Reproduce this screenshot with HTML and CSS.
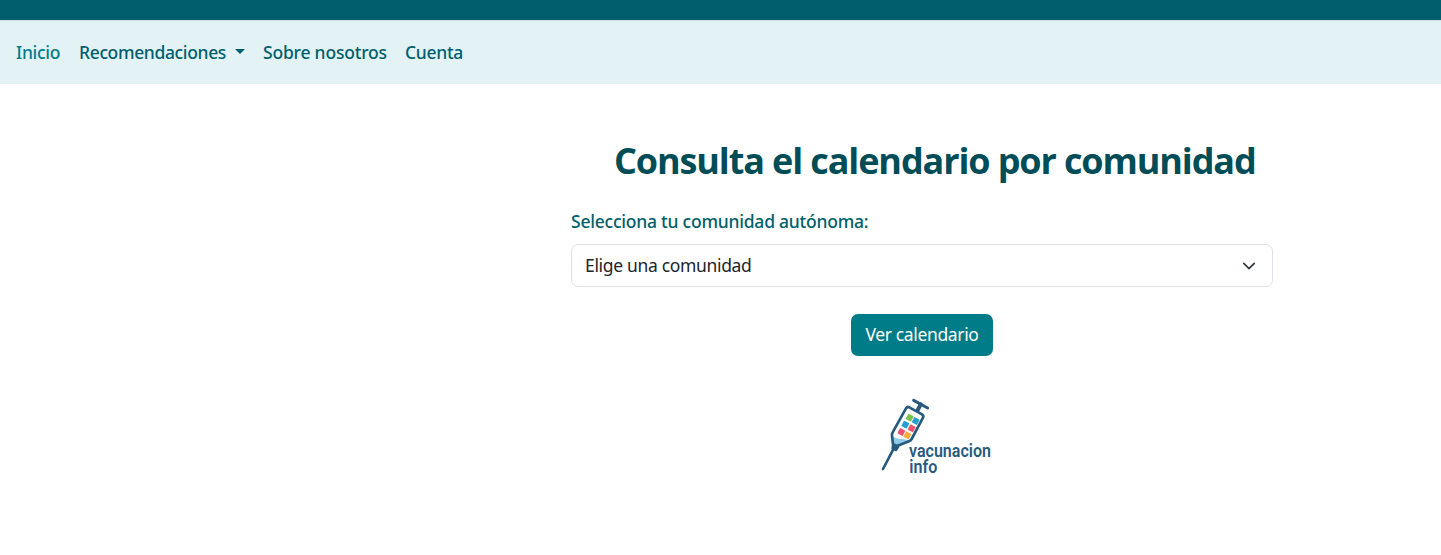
FILE: index.html
```html
<!DOCTYPE html>
<html lang="es">
<head>
<meta charset="utf-8">
<title>Vacunación Info</title>
<link rel="stylesheet" href="styles.css">
</head>
<body>
<header class="topbar"></header>
<nav class="navbar">
  <a class="nav-link active"><span class="t-inicio">Inicio</span></a>
  <a class="nav-link dropdown"><span class="t-reco">Recomendaciones</span><i class="caret"></i></a>
  <a class="nav-link"><span class="t-sobre">Sobre nosotros</span></a>
  <a class="nav-link"><span class="t-cuenta">Cuenta</span></a>
</nav>
<main class="content">
  <h1 class="title"><span>Consulta el calendario por comunidad</span></h1>
  <div class="label"><span>Selecciona tu comunidad autónoma:</span></div>
  <div class="select">
    <span class="select-text">Elige una comunidad</span>
    <svg class="chevron" viewBox="0 0 16 16"><path d="m2 5 6 6 6-6" fill="none" stroke="#343a40" stroke-linecap="round" stroke-linejoin="round" stroke-width="2"/></svg>
  </div>
  <button class="button"><span>Ver calendario</span></button>
  <svg class="logo" viewBox="0 0 390 270">
    <g fill="none" stroke="#285a7d" stroke-linecap="round" stroke-linejoin="round">
      <path d="M131 31 173 54" stroke-width="9"/>
      <path d="M152 43 140 66" stroke-width="12"/>
      <path d="M73 172 39 237" stroke-width="8"/>
    </g>
    <path d="M108 55Q112 49 118 52L156 73Q162 77 159 83L125 147Q122 152 117 154L81 168 69 163 66 137Q65 132 68 127Z" fill="#fff"/>
    <path d="M67 138Q80 148 92 147T122 152L81 168 69 163Z" fill="#8dcbe8"/>
    <path d="M108 55Q112 49 118 52L156 73Q162 77 159 83L125 147Q122 152 117 154L81 168 69 163 66 137Q65 132 68 127Z" fill="none" stroke="#285a7d" stroke-width="8" stroke-linejoin="round"/>
    <path d="M69 163 85 171 78 181 67 175Z" fill="#285a7d" stroke="#285a7d" stroke-width="6" stroke-linejoin="round"/>
    <g>
      <rect x="110" y="74" width="18" height="18" rx="2" fill="#7bc24b" transform="rotate(28 119 83)"/>
      <rect x="128" y="84" width="18" height="18" rx="2" fill="#239fd0" transform="rotate(28 137 93)"/>
      <rect x="97" y="95" width="18" height="18" rx="2" fill="#239fd0" transform="rotate(28 106 104)"/>
      <rect x="116" y="106" width="18" height="18" rx="2" fill="#ed506c" transform="rotate(28 125 115)"/>
      <rect x="85" y="117" width="18" height="18" rx="2" fill="#ed506c" transform="rotate(28 94 126)"/>
      <rect x="103" y="127" width="18" height="18" rx="2" fill="#fbaa3b" transform="rotate(28 112 136)"/>
    </g>
    <g class="logo-text">
      <text x="117" y="200" textLength="246" lengthAdjust="spacingAndGlyphs">vacunacion</text>
      <text x="118" y="249" textLength="84" lengthAdjust="spacingAndGlyphs">info</text>
    </g>
  </svg>
</main>
</body>
</html>
```
FILE: styles.css
```css
* { box-sizing: border-box; }
body {
  margin: 0;
  background: #fff;
  font-family: "Noto Sans", "Open Sans", sans-serif;
  font-size: 17.5px;
  line-height: 27px;
  color: #212529;
}
.topbar { height: 20px; background: #005f6b; }
.navbar {
  height: 64px;
  padding: 0 16px 1px;
  display: flex;
  align-items: center;
  gap: 18px;
  background: #e2f2f5;
  border-top: 1px solid #c5dee2;
}
.nav-link {
  display: flex;
  color: #005f6b;
  font-weight: 500;
  letter-spacing: -0.3px;
  white-space: nowrap;
}
.nav-link.active { color: #007c89; }
.nav-link span { display: block; }
.t-inicio { width: 45px; }
.nav-link .t-reco { width: 147px; letter-spacing: -0.36px; }
.nav-link .t-sobre { width: 124px; letter-spacing: -0.2px; }
.t-cuenta { width: 58px; }
.caret {
  width: 0;
  height: 0;
  margin: 10px 0 0 9px;
  border: 5px solid transparent;
  border-top-color: #005f6b;
  border-bottom: 0;
}
.content {
  width: 702px;
  margin-left: 571px;
  padding-top: 53px;
  display: flex;
  flex-direction: column;
}
.title {
  margin: 0 0 0 43px;
  height: 48px;
  font-family: "Open Sans", sans-serif;
  font-size: 36px;
  line-height: 48px;
  font-weight: 700;
  letter-spacing: -1.12px;
  color: #004d57;
  white-space: nowrap;
}
.label {
  margin-top: 23px;
  height: 27px;
  font-weight: 500;
  letter-spacing: -0.23px;
  color: #005f6b;
}
.select {
  height: 43px;
  margin-top: 9px;
  padding: 0 16px 0 13px;
  display: flex;
  align-items: center;
  justify-content: space-between;
  border: 1px solid #dee2e6;
  border-radius: 7px;
  letter-spacing: -0.33px;
}
.chevron { width: 14px; height: 14px; }
.button {
  align-self: center;
  width: 142px;
  height: 42px;
  margin-top: 27px;
  padding: 0 0 1px;
  border: 0;
  border-radius: 7px;
  background: #007c89;
  color: #fff;
  font: inherit;
  letter-spacing: -0.35px;
}
.logo {
  width: 130px;
  height: 90px;
  margin: 34px 0 0 299px;
}
.logo-text {
  font-family: Roboto, sans-serif;
  font-size: 53px;
  font-weight: 600;
  fill: #285a7d;
}
```
